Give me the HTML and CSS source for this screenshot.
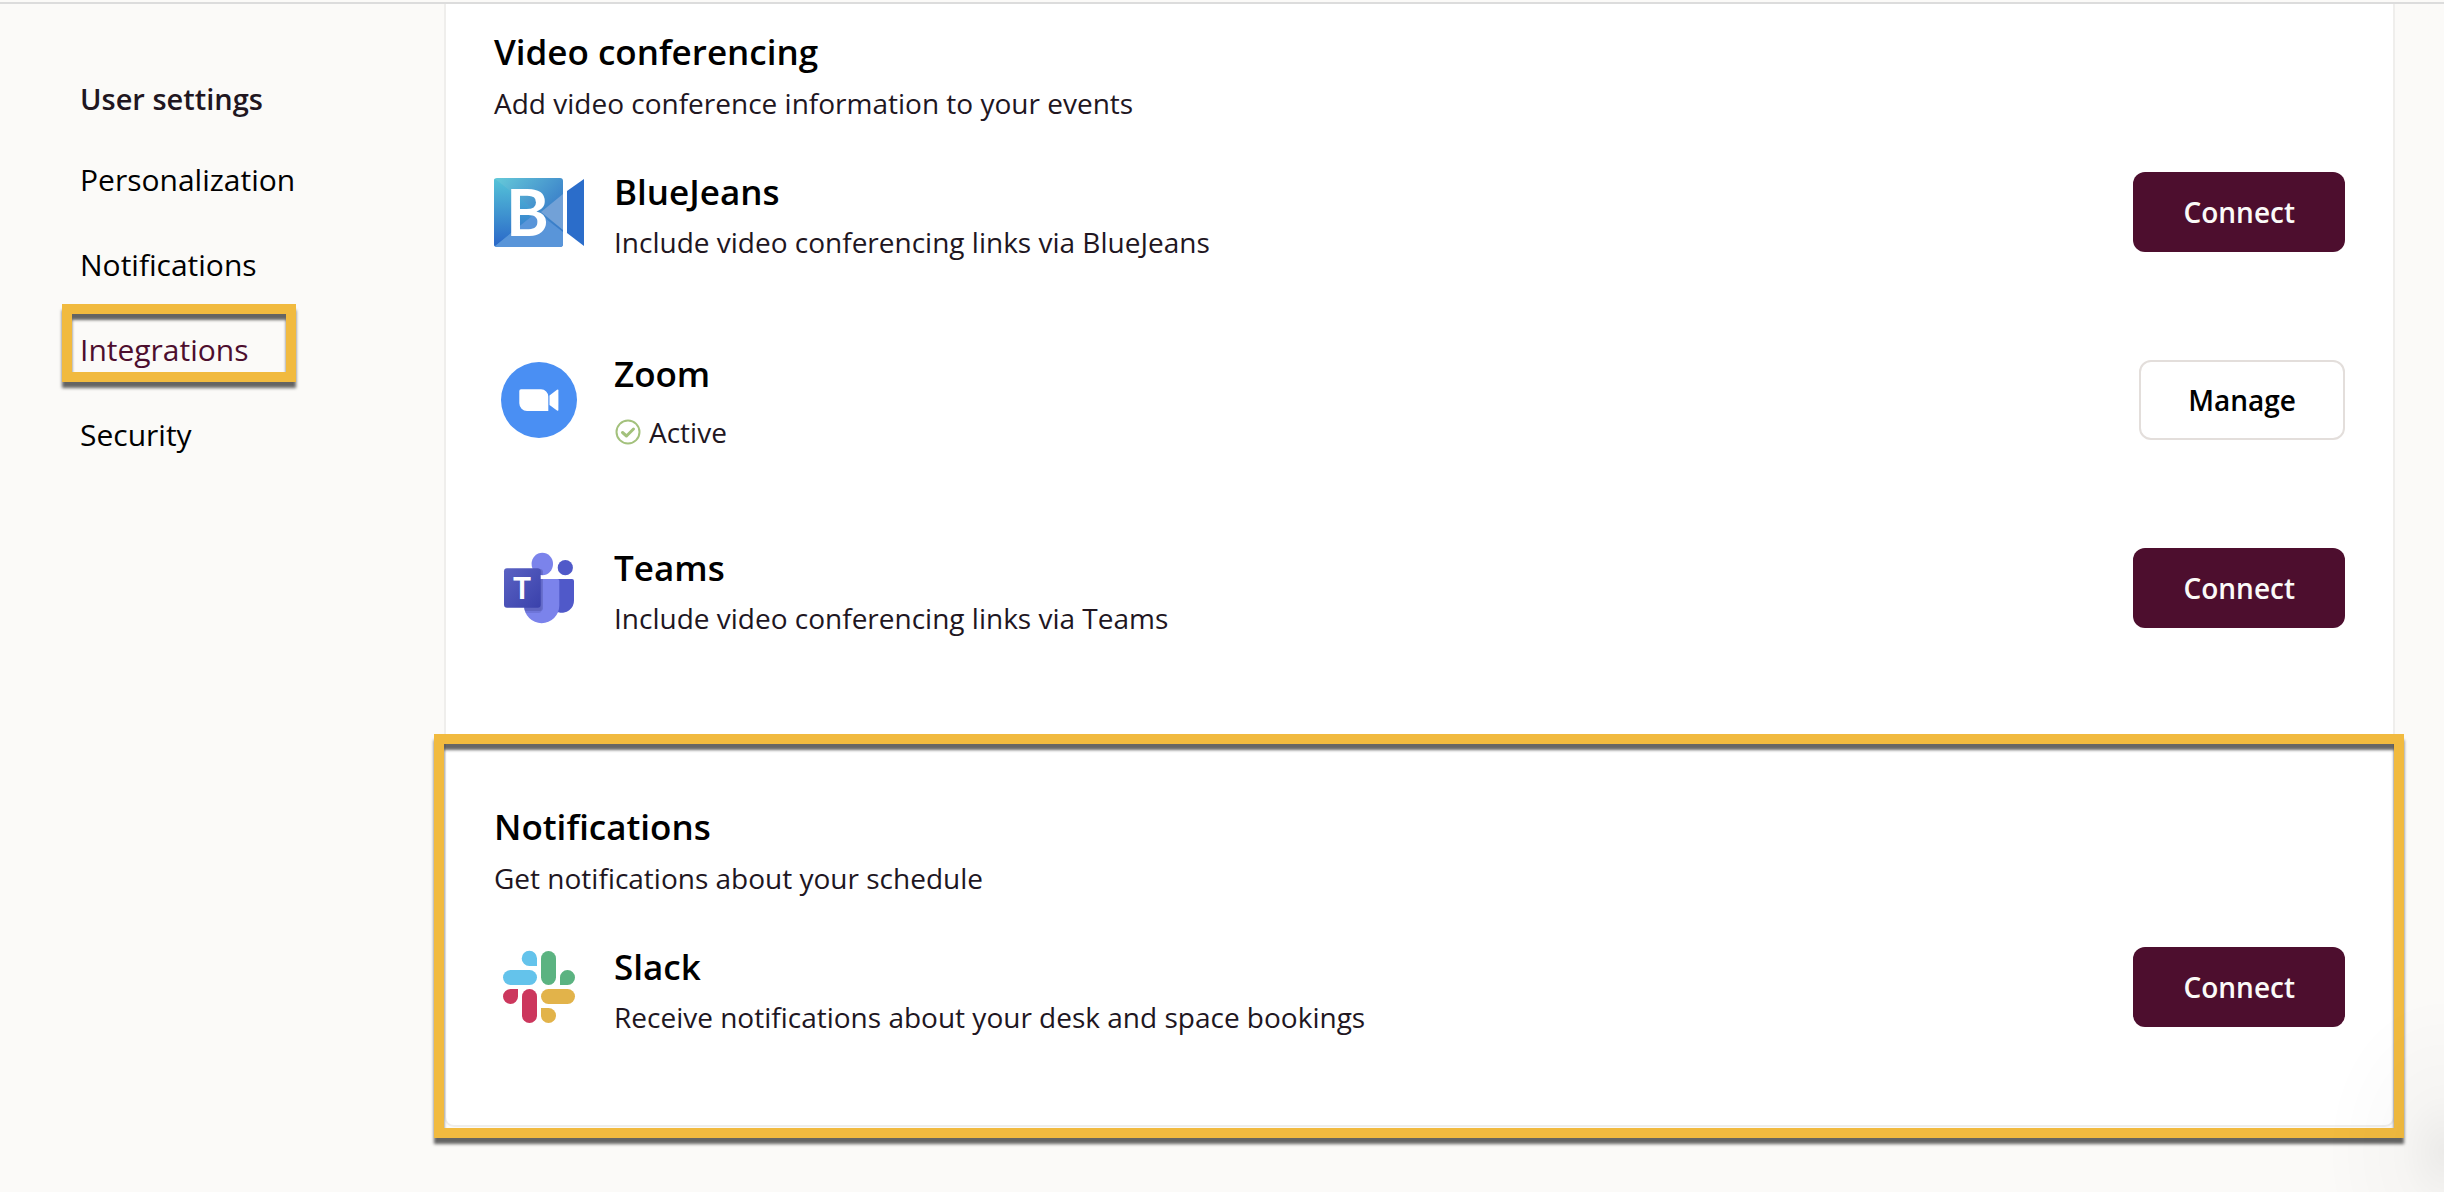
FILE: index.html
```html
<!DOCTYPE html>
<html lang="en">
<head>
  <meta charset="UTF-8">
  <meta name="viewport" content="width=device-width, initial-scale=1">
  <title>Integrations</title>
  <link rel="stylesheet" href="styles.css">
</head>
<body>
  <div class="layout">
    <nav class="sidebar" aria-label="User settings">
      <h2>User settings</h2>
      <ul>
        <li><a href="#personalization">Personalization</a></li>
        <li><a href="#notifications">Notifications</a></li>
        <li class="active"><a href="#integrations" aria-current="page">Integrations</a></li>
        <li><a href="#security">Security</a></li>
      </ul>
    </nav>

    <main class="panel">
      <section class="group">
        <h1>Video conferencing</h1>
        <p class="intro">Add video conference information to your events</p>

        <div class="rows">
          <div class="row">
            <svg class="logo" viewBox="0 0 90 80" aria-hidden="true">
              <defs>
                <linearGradient id="bjTop" x1="0" y1="0" x2="1" y2="1">
                  <stop offset="0" stop-color="#66cbd9"/>
                  <stop offset="0.6" stop-color="#3f87cb"/>
                  <stop offset="1" stop-color="#3374c8"/>
                </linearGradient>
                <linearGradient id="bjLeft" x1="0" y1="0" x2="0" y2="1">
                  <stop offset="0" stop-color="#55c4d8"/>
                  <stop offset="1" stop-color="#2a66c8"/>
                </linearGradient>
                <clipPath id="bjClip"><rect x="0" y="6" width="69" height="69" rx="3"/></clipPath>
              </defs>
              <g clip-path="url(#bjClip)">
                <rect x="0" y="6" width="69" height="69" fill="url(#bjTop)"/>
                <path d="M0 6L43 40L0 75z" fill="url(#bjLeft)"/>
                <path d="M0 75L43 40L69 60V75z" fill="#5995d9"/>
                <path d="M47 40L69 22V58z" fill="#72a1d7"/>
              </g>
              <path d="M73 19L90 7V74L73 61z" fill="#2b6dca"/>
              <text class="logo-b" x="12" y="64">B</text>
            </svg>
            <div class="copy">
              <h3>BlueJeans</h3>
              <p>Include video conferencing links via BlueJeans</p>
            </div>
            <button type="button" class="primary">Connect</button>
          </div>

          <div class="row connected">
            <svg class="logo" viewBox="0 0 90 80" aria-hidden="true">
              <circle cx="45" cy="40" r="38" fill="#4a8ff3"/>
              <path d="M27 29.3H47a7.3 7.3 0 0 1 7.3 7.3V51H33a7.7 7.7 0 0 1-7.7-7.7V31a1.7 1.7 0 0 1 1.7-1.7z" fill="#fff"/>
              <path d="M55.5 35.6L63 29.8Q64.4 29 64.4 30.4V50Q64.4 51.2 63 50.6L55.5 45z" fill="#fff"/>
            </svg>
            <div class="copy">
              <h3>Zoom</h3>
              <p class="status">
                <svg viewBox="0 0 28 28" aria-hidden="true">
                  <circle cx="14" cy="14" r="11.5"/>
                  <path class="tick" d="M8.5 14.5L12.5 18L19.5 11"/>
                </svg>
                Active
              </p>
            </div>
            <button type="button" class="secondary">Manage</button>
          </div>

          <div class="row">
            <svg class="logo" viewBox="0 0 90 80" aria-hidden="true">
              <defs>
                <linearGradient id="tmBox" x1="0" y1="0" x2="1" y2="1">
                  <stop offset="0" stop-color="#5a62c3"/>
                  <stop offset="1" stop-color="#3a41ab"/>
                </linearGradient>
                <clipPath id="tmBody"><path d="M38 4H60V27H38zM30 31H65.3V57.5a17.6 17.6 0 0 1-35.3 0z"/></clipPath>
              </defs>
              <circle cx="71.3" cy="19.7" r="7.6" fill="#5059c9"/>
              <path d="M60 31H78a2 2 0 0 1 2 2V52.5a12 12 0 0 1-15.5 11.7H60z" fill="#5059c9"/>
              <ellipse cx="48.3" cy="16" rx="10.7" ry="11.2" fill="#7b83eb"/>
              <path d="M30 31H63.5a1.8 1.8 0 0 1 1.8 1.8V57.5a17.6 17.6 0 0 1-35.3 0z" fill="#7b83eb"/>
              <g clip-path="url(#tmBody)" fill="#3c438f">
                <rect x="12" y="21" width="37" height="42" rx="3" opacity="0.3"/>
                <rect x="12" y="21" width="35.5" height="44" rx="3" opacity="0.2"/>
              </g>
              <rect x="10" y="20.3" width="36.7" height="39.5" rx="3" fill="url(#tmBox)"/>
              <text class="logo-t" x="28" y="51">T</text>
            </svg>
            <div class="copy">
              <h3>Teams</h3>
              <p>Include video conferencing links via Teams</p>
            </div>
            <button type="button" class="primary">Connect</button>
          </div>
        </div>
      </section>

      <section class="group highlighted">
        <h1>Notifications</h1>
        <p class="intro">Get notifications about your schedule</p>

        <div class="rows">
          <div class="row">
            <svg class="logo" viewBox="0 0 90 80" aria-hidden="true">
              <g fill="#64c3eb">
                <path d="M43 19H35.4a7.65 7.65 0 1 1 7.6-7.65z"/>
                <rect x="9" y="23" width="34" height="15" rx="7.5"/>
              </g>
              <g fill="#5bb381">
                <rect x="47" y="4" width="15" height="34" rx="7.5"/>
                <path d="M66 38V30.5a7.5 7.5 0 1 1 7.5 7.5z"/>
              </g>
              <g fill="#cc375d">
                <path d="M24 42V49.5a7.5 7.5 0 1 1-7.5-7.5z"/>
                <rect x="28" y="42" width="15" height="34" rx="7.5"/>
              </g>
              <g fill="#e2b34a">
                <rect x="47" y="42" width="34" height="15" rx="7.5"/>
                <path d="M47 61H54.5a7.5 7.5 0 1 1-7.5 7.5z"/>
              </g>
            </svg>
            <div class="copy">
              <h3>Slack</h3>
              <p>Receive notifications about your desk and space bookings</p>
            </div>
            <button type="button" class="primary">Connect</button>
          </div>
        </div>
      </section>
    </main>
  </div>
</body>
</html>
```

FILE: styles.css
```css
:root {
  --bg: #fbfaf8;
  --text: #21161f;
  --brand: #4d0e2e;
  --line: #efeeec;
  --marker: #f1ba3f;
}

*, *::after {
  box-sizing: border-box;
}

body {
  font-family: "Open Sans", Lato, sans-serif;
  font-size: 28px;
  line-height: 40px;
  background: var(--bg);
  color: var(--text);
  margin: 0;
  padding-top: 2px;
  min-height: 100vh;
}

/* soft shadow in the lower right corner */
body::after {
  content: "";
  position: fixed;
  right: 0;
  bottom: 0;
  width: 120px;
  height: 200px;
  background: radial-gradient(ellipse at 100% 80%, rgba(0,0,0,0.06), rgba(0,0,0,0.02) 25%, transparent 70%);
  pointer-events: none;
}

h1, h2, h3, p, ul {
  margin: 0;
  padding: 0;
}

.layout {
  display: flex;
  border-top: 2px solid #dcdcdc;
}

.sidebar {
  flex: 0 0 444px;
  padding: 75px 80px;
  font-size: 30px;
}

.sidebar h2 {
  font-size: 29px;
  font-weight: 600;
  margin-bottom: 41px;
}

.sidebar ul {
  list-style: none;
  display: flex;
  flex-direction: column;
  align-items: flex-start;
  gap: 45px;
}

.sidebar a {
  color: #000;
  text-decoration: none;
}

.sidebar .active {
  position: relative;
}

.sidebar .active a {
  color: var(--brand);
}

/* marker frames lie over the page */
.active::after, .highlighted::after {
  content: "";
  position: absolute;
  border: 10px solid var(--marker);
  box-shadow: 0 6px 3px rgba(0,0,0,0.6), inset 0 6px 3px rgba(0,0,0,0.6);
  pointer-events: none;
}

.active::after {
  top: -26px;
  left: -18px;
  width: 234px;
  height: 78px;
}

.highlighted::after {
  inset: -10px -11px -13px -12px;
}

.panel {
  flex: 1;
  margin-right: 49px;
  background: #fff;
  border: 2px solid var(--line);
  border-top: none;
  border-radius: 0 0 10px 10px;
}

.group {
  padding: 28px 48px 116px;
}

.highlighted {
  position: relative;
  padding-top: 63px;
  padding-bottom: 98px;
}

h1, h3 {
  font-size: 35px;
  font-weight: 600;
  color: #000;
}

.intro {
  margin: 11px 0 49px;
}

.rows {
  display: flex;
  flex-direction: column;
  gap: 108px;
}

.row {
  display: flex;
  align-items: flex-start;
  height: 80px;
}

.logo {
  width: 90px;
  height: 80px;
  margin-right: 30px;
}

.logo-b, .logo-t {
  fill: #fff;
  font-family: Lato, sans-serif;
  font-weight: 700;
}

.logo-b {
  font-size: 65px;
}

.logo-t {
  font-size: 30px;
  text-anchor: middle;
}

.copy {
  flex: 1;
  display: flex;
  flex-direction: column;
  gap: 10px;
}

.connected .copy {
  gap: 18px;
  margin-top: -6px;
}

.status {
  display: flex;
  align-items: center;
  gap: 7px;
}

.status svg {
  width: 28px;
  height: 28px;
  fill: none;
  stroke: #a3c17c;
  stroke-width: 2;
}

.status .tick {
  stroke-width: 3;
  stroke-linecap: round;
  stroke-linejoin: round;
}

button {
  height: 80px;
  padding: 0 50px;
  border: none;
  border-radius: 12px;
  font-family: inherit;
  font-size: 28px;
  font-weight: 600;
  cursor: pointer;
}

.primary {
  background: var(--brand);
  color: #fbfaf8;
}

.secondary {
  background: #fff;
  color: #000;
  padding: 0 47px;
  border: 2px solid #e3dedb;
}
```
